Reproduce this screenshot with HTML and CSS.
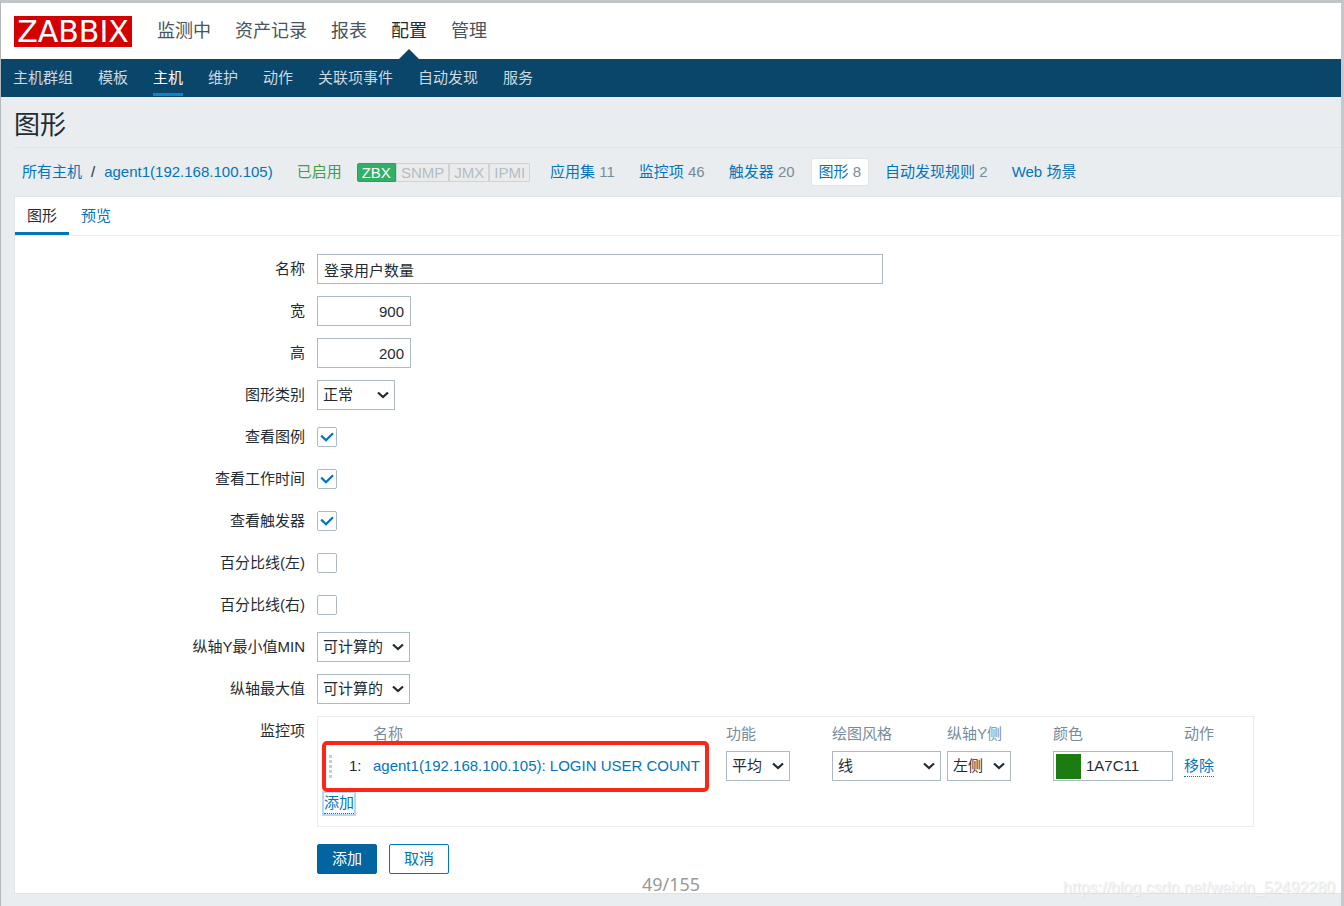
FILE: index.html
```html
<!DOCTYPE html>
<html lang="zh-CN">
<head>
<meta charset="utf-8">
<title>图形</title>
<link rel="stylesheet" href="styles.css">
</head>
<body>
<header class="top">
  <a class="logo" href="#">ZABBIX</a>
  <nav class="menu">
    <a href="#">监测中</a>
    <a href="#">资产记录</a>
    <a href="#">报表</a>
    <a href="#" class="current">配置</a>
    <a href="#">管理</a>
  </nav>
</header>
<nav class="submenu">
  <a href="#">主机群组</a>
  <a href="#">模板</a>
  <a href="#" class="current">主机</a>
  <a href="#">维护</a>
  <a href="#">动作</a>
  <a href="#">关联项事件</a>
  <a href="#">自动发现</a>
  <a href="#">服务</a>
</nav>
<main class="content">
  <h1 class="title">图形</h1>
  <div class="objects">
    <div class="crumbs"><a href="#">所有主机</a><span>/</span><a href="#">agent1(192.168.100.105)</a></div>
    <div class="status">
      <span class="enabled">已启用</span>
      <div class="badges"><span class="badge on">ZBX</span><span class="badge">SNMP</span><span class="badge">JMX</span><span class="badge">IPMI</span></div>
    </div>
    <div class="object"><a href="#">应用集</a> 11</div>
    <div class="object"><a href="#">监控项</a> 46</div>
    <div class="object"><a href="#">触发器</a> 20</div>
    <div class="object selected"><a href="#">图形</a> 8</div>
    <div class="object"><a href="#">自动发现规则</a> 2</div>
    <div class="object"><a href="#">Web 场景</a></div>
  </div>
  <section class="panel">
    <div class="tabs">
      <a href="#" class="current">图形</a>
      <a href="#">预览</a>
    </div>
    <form class="form">
      <label for="name">名称</label>
      <div class="field"><input class="text wide" id="name" type="text" value="登录用户数量"></div>
      <label for="width">宽</label>
      <div class="field"><input class="text number" id="width" type="text" value="900"></div>
      <label for="height">高</label>
      <div class="field"><input class="text number" id="height" type="text" value="200"></div>
      <label for="type">图形类别</label>
      <div class="field"><select class="select type" id="type"><option>正常</option></select></div>
      <label for="legend">查看图例</label>
      <div class="field"><input class="check" id="legend" type="checkbox" checked></div>
      <label for="worktime">查看工作时间</label>
      <div class="field"><input class="check" id="worktime" type="checkbox" checked></div>
      <label for="triggers">查看触发器</label>
      <div class="field"><input class="check" id="triggers" type="checkbox" checked></div>
      <label for="pleft">百分比线(左)</label>
      <div class="field"><input class="check" id="pleft" type="checkbox"></div>
      <label for="pright">百分比线(右)</label>
      <div class="field"><input class="check" id="pright" type="checkbox"></div>
      <label for="ymin">纵轴Y最小值MIN</label>
      <div class="field"><select class="select axis" id="ymin"><option>可计算的</option></select></div>
      <label for="ymax">纵轴最大值</label>
      <div class="field"><select class="select axis" id="ymax"><option>可计算的</option></select></div>
      <span class="group-label" id="items-label">监控项</span>
      <div class="field">
        <div class="items">
          <table aria-labelledby="items-label">
            <colgroup><col class="c-drag"><col class="c-num"><col class="c-name"><col class="c-func"><col class="c-style"><col class="c-side"><col class="c-color"><col class="c-action"></colgroup>
            <thead>
              <tr><th></th><th></th><th>名称</th><th>功能</th><th>绘图风格</th><th>纵轴Y侧</th><th>颜色</th><th>动作</th></tr>
            </thead>
            <tbody>
              <tr>
                <td><svg class="drag" width="3" height="23" viewBox="0 0 3 23" aria-hidden="true"><path d="M0 0h3v3H0zM0 5h3v3H0zM0 10h3v3H0zM0 15h3v3H0zM0 20h3v3H0z"/></svg></td>
                <td>1:</td>
                <td><a href="#">agent1(192.168.100.105): LOGIN USER COUNT</a></td>
                <td><select class="select short" aria-label="功能"><option>平均</option></select></td>
                <td><select class="select style" aria-label="绘图风格"><option>线</option></select></td>
                <td><select class="select short" aria-label="纵轴Y侧"><option>左侧</option></select></td>
                <td><div class="color"><button type="button" class="swatch" aria-label="颜色"></button><input type="text" aria-label="颜色" value="1A7C11"></div></td>
                <td><button type="button" class="link">移除</button></td>
              </tr>
            </tbody>
          </table>
          <div class="add-row"><button type="button" class="link focused">添加</button></div>
          <div class="highlight"></div>
        </div>
      </div>
      <div class="actions">
        <button type="button" class="btn primary">添加</button>
        <button type="button" class="btn">取消</button>
      </div>
    </form>
  </section>
</main>
<div class="counter">49/155</div>
<div class="watermark">https://blog.csdn.net/weixin_52492280</div>
</body>
</html>
```
FILE: styles.css
```css
* { box-sizing: border-box; }

body {
  position: relative;
  margin: 0;
  min-height: 100vh;
  border: solid #b4b8bb;
  border-width: 3px 3px 0 1px;
  border-top-color: #c0c5c8;
  border-right-color: #c3c9cd;
  background: #e9edf0;
  color: #1f2c33;
  font: 15px/20px "Liberation Sans", "Noto Sans CJK SC", sans-serif;
}

a { color: #0275b8; text-decoration: none; }
input, select, button { font: inherit; color: inherit; margin: 0; }

.top {
  display: flex;
  align-items: center;
  gap: 25px;
  height: 56px;
  padding-left: 13px;
  background: #fff;
}
.logo {
  width: 118px;
  background: #d40000;
  color: #fff;
  font: 30px/31px "DejaVu Sans", sans-serif;
  text-align: center;
}
.menu { display: flex; gap: 24px; height: 100%; font-size: 18px; line-height: 56px; }
.menu a { position: relative; color: #48545b; }
.menu .current { color: #1f2c33; }
.menu .current::after {
  content: "";
  position: absolute;
  left: 50%;
  bottom: 0;
  margin-left: -10px;
  border: 10px solid transparent;
  border-top: 0;
  border-bottom-color: #0a466a;
}

.submenu { display: flex; gap: 25px; height: 38px; padding: 0 12px; background: #0a466a; }
.submenu a { height: 37px; color: #cdd9e1; line-height: 38px; }
.submenu .current { border-bottom: 3px solid #1182cc; color: #fff; }

.content { padding-left: 13px; }
.title {
  margin: 0;
  height: 51px;
  border-bottom: 1px solid #dfe4e7;
  font-size: 26px;
  font-weight: 400;
  line-height: 56px;
}
.objects { display: flex; align-items: center; gap: 8px; height: 48px; white-space: nowrap; }
.crumbs { display: flex; gap: 9px; padding: 0 8px; }
.status { display: flex; align-items: center; gap: 15px; padding: 0 4px 0 8px; }
.enabled { color: #429e47; }
.badges { display: flex; }
.badge {
  padding: 0 4px;
  border: 1px solid #ccd5d9;
  background: #ebebeb;
  color: #b0bec5;
  line-height: 17px;
}
.badge.on { border-color: #2f9f5e; border-radius: 2px 0 0 2px; background: #34af67; color: #fff; }
.badge:last-child { border-radius: 0 2px 2px 0; }
.object { padding: 2px 7px; border: 1px solid transparent; color: #768d99; line-height: 22px; }
.selected { border-color: #dfe4e7; border-radius: 2px; background: #fff; }

.panel { border: 1px solid #dfe4e7; border-right: 0; background: #fff; }
.tabs { display: flex; height: 39px; border-bottom: 1px solid #ebeef0; }
.tabs a { height: 38px; padding: 0 12px; line-height: 37px; }
.tabs .current { border-bottom: 3px solid #0275b8; color: #1f2c33; }

.form {
  display: grid;
  grid-template-columns: 290px 1fr;
  gap: 12px;
  padding: 18px 0 19px;
}
.form > label, .group-label { line-height: 30px; text-align: right; }
.field { display: flex; align-items: center; min-height: 30px; }
.text, .select { height: 30px; border: 1px solid #acbbc2; border-radius: 0; background: #fff; }
.text { padding: 0 6px; }
.wide { width: 566px; }
.number { width: 94px; text-align: right; }
.select {
  display: block;
  appearance: none;
  padding: 0 5px;
  background: #fff url("data:image/svg+xml,%3Csvg xmlns='http://www.w3.org/2000/svg' width='12' height='8'%3E%3Cpath d='M1 1.5l5 4.5 5-4.5' fill='none' stroke='%231f2c33' stroke-width='2.2'/%3E%3C/svg%3E") no-repeat right 5px center;
}
.type { width: 78px; }
.axis { width: 93px; }
.short { width: 64px; }
.style { width: 109px; }
.check {
  appearance: none;
  width: 20px;
  height: 20px;
  border: 1px solid #acbbc2;
  border-radius: 2px;
  background: #fff;
}
.check:checked {
  background: #fff url("data:image/svg+xml,%3Csvg xmlns='http://www.w3.org/2000/svg' width='14' height='10'%3E%3Cpath d='M1.2 3.6L6 8.2 13 1.2' fill='none' stroke='%230275b8' stroke-width='2.2'/%3E%3C/svg%3E") no-repeat center;
}

.items { position: relative; padding: 5px; border: 1px solid #e9edf0; }
.items table { width: 925px; border-collapse: collapse; table-layout: fixed; }
.c-drag { width: 20px; }
.c-num { width: 24px; }
.c-name { width: 353px; }
.c-func, .c-side { width: 106px; }
.c-style { width: 115px; }
.c-color { width: 131px; }
.c-action { width: 70px; }
.items th, .items td { padding: 0 0 0 6px; text-align: left; white-space: nowrap; }
.items th { height: 24px; color: #768d99; font-weight: 400; }
.items td { height: 40px; }
.drag { display: block; fill: #c3cdd3; }
.color {
  display: flex;
  align-items: center;
  gap: 5px;
  width: 120px;
  height: 30px;
  padding: 0 2px;
  border: 1px solid #acbbc2;
}
.swatch { flex: none; width: 25px; height: 25px; padding: 0; border: 0; background: #1a7c11; }
.color input { flex: 1; min-width: 0; padding: 0; border: 0; background: none; }
.link {
  padding: 0;
  border: 0;
  border-bottom: 1px dotted #0275b8;
  background: none;
  color: #0275b8;
  line-height: 20px;
}
.add-row { display: flex; align-items: center; height: 35px; padding-left: 1px; }
.focused { outline: 2px solid #b5d8f3; }
.highlight {
  position: absolute;
  top: 24px;
  left: 4px;
  width: 387px;
  height: 51px;
  border: 4px solid #fc2517;
  border-radius: 5px;
  pointer-events: none;
}

.actions { grid-column: 2; display: flex; gap: 12px; padding-top: 5px; }
.btn {
  width: 60px;
  height: 30px;
  padding: 0;
  border: 1px solid #0275b8;
  border-radius: 2px;
  background: #fff;
  color: #0275b8;
}
.primary { border-color: #02659f; background: #02659f; color: #fff; }

.counter {
  position: absolute;
  bottom: 10px;
  left: 0;
  right: 0;
  color: #999;
  font: 18px/24px "Noto Sans", sans-serif;
  text-align: center;
}
.watermark {
  position: absolute;
  right: 6px;
  bottom: 8px;
  color: #f3f4f5;
  font-size: 16px;
  text-shadow: 1px 1px 1px #dcdfe1;
}
```
